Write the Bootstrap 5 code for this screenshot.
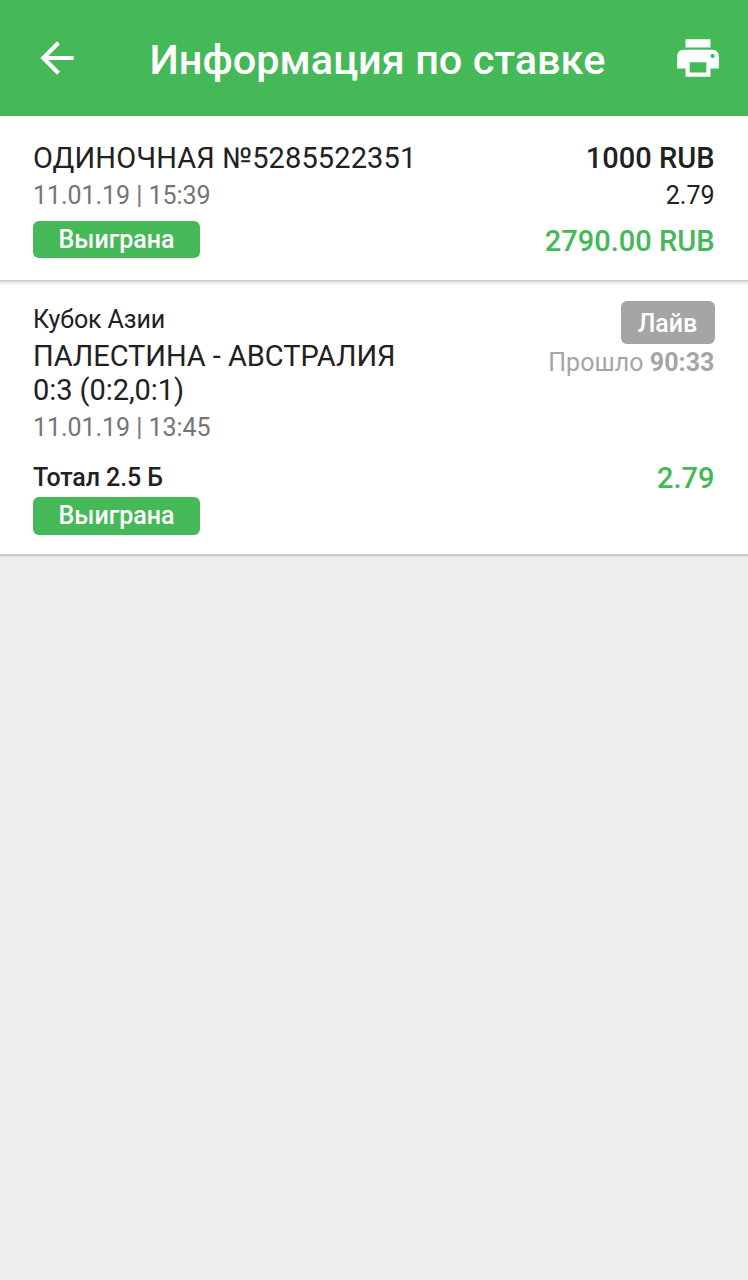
<!DOCTYPE html>
<html lang="ru">
<head>
<meta charset="utf-8">
<meta name="viewport" content="width=device-width, initial-scale=1">
<title>Информация по ставке</title>
<link href="https://cdn.jsdelivr.net/npm/bootstrap@5.3.0/dist/css/bootstrap.min.css" rel="stylesheet">
<style>
body{font-family:Roboto,sans-serif;background:#eee;color:#212121;min-height:100vh;white-space:nowrap}
.topbar{background:#45b858;height:116px;padding:0 25px 0 32px}
.topbar h1{font-size:41.5px;font-weight:500;line-height:50px;padding-top:4px}
.panel{background:#fff;padding:0 33.5px 0 33px;box-shadow:0 1px 1px rgba(0,0,0,.18)}
.summary{height:164px;padding-top:24px}
.divider{height:5px;background:linear-gradient(#c4c4c4,#dcdcdc 30%,#f0f0f0 60%,#fafafa)}
.event{height:270px;padding-top:17px;border-bottom:1px solid #d2d2d2}
.t29{font-size:29px;line-height:36px}
.t25{font-size:25px;line-height:36px}
.order-no{letter-spacing:.12px}
.teams{line-height:34px;padding-top:1px;letter-spacing:-.05px}
.date{padding-top:2px;letter-spacing:-.05px}
.event .date{padding-top:3px}
.coef{padding-top:2px}
.payout{margin-top:9px}
.pick{margin-top:14px;letter-spacing:-.1px}
.league{letter-spacing:-.1px}
.elapsed{padding-top:1px;letter-spacing:.05px}
.odds{margin-top:79px}
.muted{color:#757575}
.pale{color:#a5a5a5}
.win{color:#45b858}
.fw-md{font-weight:500}
.status{background:#45b858;font-size:25px;font-weight:500;line-height:37px;height:37px;width:167px;border-radius:6px;padding:0;margin-top:7px}
.event .status{margin-top:1px;height:38px}
.live{background:#a5a5a5;font-size:25px;font-weight:500;line-height:45px;height:43px;width:94px;border-radius:6px;padding:0;margin-top:-1px}
</style>
</head>
<body>
<header class="topbar d-flex align-items-center justify-content-between text-white">
<svg width="50" height="50" viewBox="0 0 24 24" fill="currentColor"><path d="M20 11H7.83l5.59-5.59L12 4l-8 8 8 8 1.41-1.41L7.83 13H20v-2z"/></svg>
<h1 class="mb-0">Информация по ставке</h1>
<svg width="50" height="50" viewBox="0 0 24 24" fill="currentColor"><path d="M19 8H5c-1.66 0-3 1.34-3 3v6h4v4h12v-4h4v-6c0-1.66-1.34-3-3-3zm-3 11H8v-5h8v5zm3-7c-.55 0-1-.45-1-1s.45-1 1-1 1 .45 1 1-.45 1-1 1zm-1-9H6v4h12V3z"/></svg>
</header>
<main>
<section class="summary bg-white panel shadow-none d-flex justify-content-between">
<div>
<div class="t29 order-no">ОДИНОЧНАЯ №5285522351</div>
<div class="t25 muted date">11.01.19 | 15:39</div>
<span class="badge status d-block">Выиграна</span>
</div>
<div class="text-end">
<div class="t29 fw-md">1000 RUB</div>
<div class="t25 coef">2.79</div>
<div class="t29 fw-md win payout">2790.00 RUB</div>
</div>
</section>
<div class="divider"></div>
<section class="panel event d-flex justify-content-between">
<div>
<div class="t25 league">Кубок Азии</div>
<div class="t29 teams">ПАЛЕСТИНА - АВСТРАЛИЯ<br>0:3 (0:2,0:1)</div>
<div class="t25 muted date">11.01.19 | 13:45</div>
<div class="t25 fw-md pick">Тотал 2.5 Б</div>
<span class="badge status d-block">Выиграна</span>
</div>
<div class="text-end d-flex flex-column align-items-end">
<span class="badge live">Лайв</span>
<div class="t25 pale elapsed">Прошло <span class="fw-bold">90:33</span></div>
<div class="t29 fw-md win odds">2.79</div>
</div>
</section>
</main>
<script src="https://cdn.jsdelivr.net/npm/bootstrap@5.3.0/dist/js/bootstrap.bundle.min.js"></script>
</body>
</html>
